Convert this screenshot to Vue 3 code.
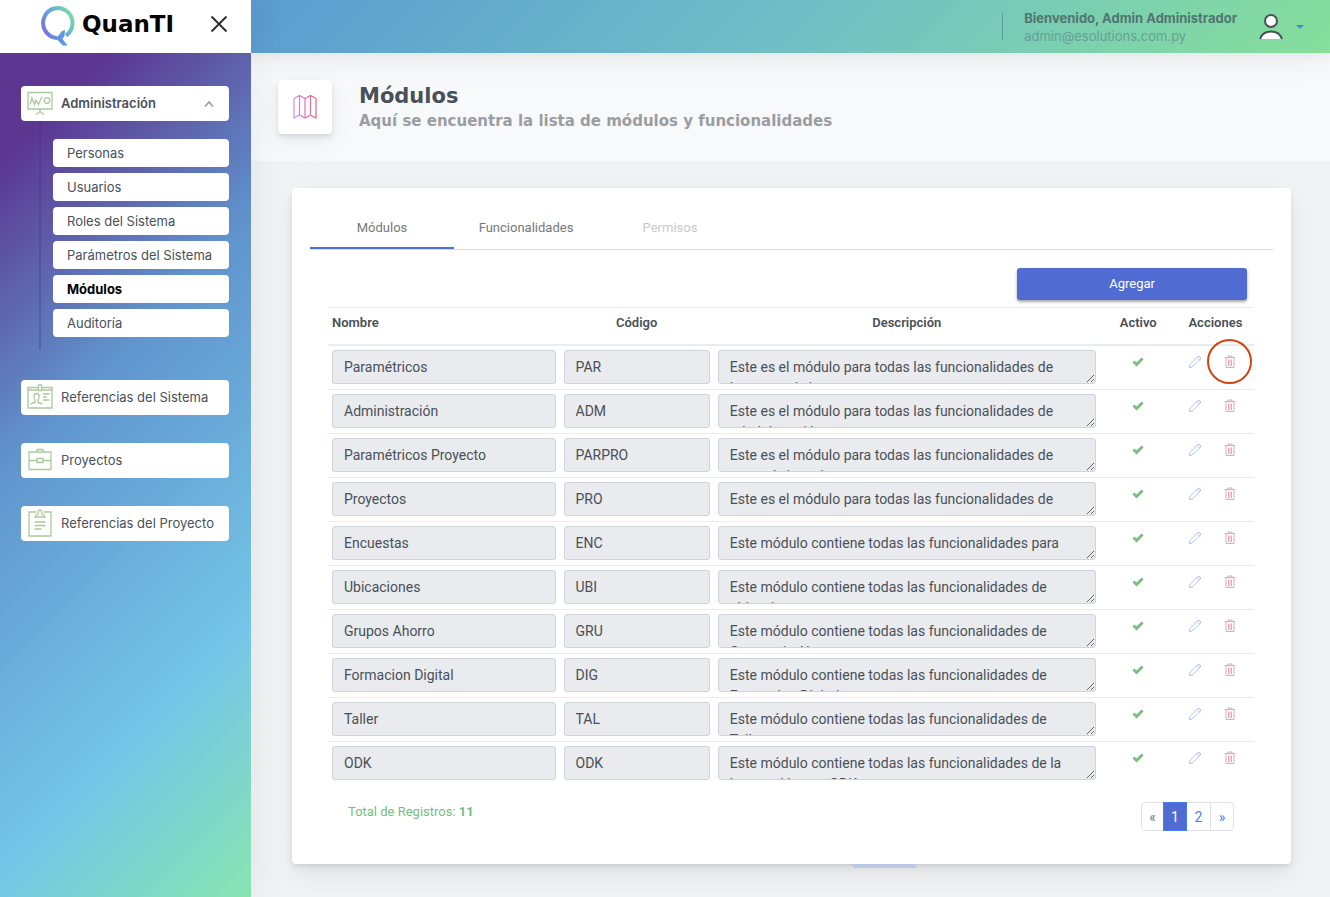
<script setup>
import { ref } from 'vue'

const submenu = ['Personas', 'Usuarios', 'Roles del Sistema', 'Parámetros del Sistema', 'Módulos', 'Auditoría']

const rows = ref([
  { name: 'Paramétricos', code: 'PAR', text: 'Este es el módulo para todas las funcionalidades de los paramétricos', marked: true },
  { name: 'Administración', code: 'ADM', text: 'Este es el módulo para todas las funcionalidades de administración' },
  { name: 'Paramétricos Proyecto', code: 'PARPRO', text: 'Este es el módulo para todas las funcionalidades de paramétricos de proyecto' },
  { name: 'Proyectos', code: 'PRO', text: 'Este es el módulo para todas las funcionalidades de proyectos' },
  { name: 'Encuestas', code: 'ENC', text: 'Este módulo contiene todas las funcionalidades para' },
  { name: 'Ubicaciones', code: 'UBI', text: 'Este módulo contiene todas las funcionalidades de ubicaciones' },
  { name: 'Grupos Ahorro', code: 'GRU', text: 'Este módulo contiene todas las funcionalidades de Grupos de Ahorro' },
  { name: 'Formacion Digital', code: 'DIG', text: 'Este módulo contiene todas las funcionalidades de Formacion Digital' },
  { name: 'Taller', code: 'TAL', text: 'Este módulo contiene todas las funcionalidades de Taller' },
  { name: 'ODK', code: 'ODK', text: 'Este módulo contiene todas las funcionalidades de la integración con ODK' },
])
</script>

<template>
  <div class="app">
    <aside class="sidebar">
      <div class="brand">
        <a class="logo" href="#">
          <svg class="logo-mark" viewBox="0 0 36 42" aria-hidden="true">
            <defs>
              <linearGradient id="logoRing" x1="0" y1="0.8" x2="1" y2="0.2">
                <stop offset="0" stop-color="#7a6ee0" />
                <stop offset="0.45" stop-color="#62a8de" />
                <stop offset="1" stop-color="#79dba6" />
              </linearGradient>
            </defs>
            <path d="M17 33 A14.700 15 0 1 1 26 30.500" fill="none" stroke="url(#logoRing)" stroke-width="4" />
            <path d="M25 25 L22 26 L16 33.500 L23 40.500 L27.500 40.500 L22.500 34 L24.500 31 Z" fill="#6196e2" />
          </svg>
          <span>QuanTI</span>
        </a>
        <button class="close" type="button" aria-label="Cerrar menú">
          <svg viewBox="0 0 18 18"><path d="M1.500 1.500 L16.500 16.500 M16.500 1.500 L1.500 16.500" fill="none" stroke="#2a2a2a" stroke-width="1.800" /></svg>
        </button>
      </div>

      <nav class="menu">
        <div class="group">
          <a class="item open" href="#">
            <svg class="item-icon" viewBox="0 0 26 28">
              <path d="M1 3.500 H25 V20 H1 Z M13 20 V23 M9 25.500 L13 22.500 L17 25.500 M3 15.500 L5 9 L7.500 15.500 L9 11 L11.500 15.500 L15 7.500" />
              <circle cx="20" cy="11.500" r="2.800" />
            </svg>
            <span>Administración</span>
            <svg class="chevron" viewBox="0 0 10 10"><path d="M1 7.500 L5 3 L9 7.500" /></svg>
          </a>
          <ul class="submenu">
            <li v-for="label in submenu" :key="label">
              <a href="#" :class="{ active: label === 'Módulos' }">{{ label }}</a>
            </li>
          </ul>
        </div>
        <a class="item" href="#">
          <svg class="item-icon" viewBox="0 0 26 28">
            <path d="M11 4.500 H1 V25 H25 V4.500 H15 M1 7 H11 M15 7 H25 M11.500 2 H14.500 V7.500 H11.500 Z M4 21.500 Q4.500 20 8 19.500 V17 Q6.500 15.500 7 13 Q7 10.500 9.500 10.500 Q12 10.500 12 13 Q12.500 15.500 11 17 V19.500 Q14.500 20 15 21.500 M16 11 H22.500 M16 14 H20 M16 17 H22.500" />
          </svg>
          <span>Referencias del Sistema</span>
        </a>
        <a class="item" href="#">
          <svg class="item-icon" viewBox="0 0 26 28">
            <path d="M2 6 H24 V23.500 H2 Z M10 6 V3.500 H16 V6 M2 14.500 H10 M16 14.500 H24 M10 12.500 H16 V16.500 H10 Z" />
          </svg>
          <span>Proyectos</span>
        </a>
        <a class="item" href="#">
          <svg class="item-icon" viewBox="0 0 26 28">
            <path d="M9 3 H2 V27 H24 V3 H17 M8 8 Q9 5.500 11 5 V3 Q11.300 1 13 1 Q14.700 1 15 3 V5 Q17 5.500 18 8 Z M7.500 13 H18.500 M7.500 16.500 H18.500 M7.500 20 H14.500" />
          </svg>
          <span>Referencias del Proyecto</span>
        </a>
      </nav>
    </aside>

    <div class="main">
      <header class="topbar">
        <div class="user">
          <strong>Bienvenido, Admin Administrador</strong>
          <span>admin@esolutions.com.py</span>
        </div>
        <button class="account" type="button" aria-label="Cuenta">
          <svg class="avatar" viewBox="0 0 26 28">
            <circle cx="13" cy="8" r="6" fill="#fff" stroke="#495057" stroke-width="2" />
            <path d="M2 26 Q4.500 18.500 13 18.500 Q21.500 18.500 24 26" fill="#fff" stroke="#495057" stroke-width="2" />
          </svg>
          <span class="caret"></span>
        </button>
      </header>

      <section class="title-band">
        <div class="title-icon">
          <svg viewBox="0 0 26 26">
            <defs>
              <linearGradient id="mapStroke" x1="0" y1="0" x2="1" y2="0">
                <stop offset="0" stop-color="#d68be6" />
                <stop offset="1" stop-color="#de6680" />
              </linearGradient>
            </defs>
            <path d="M2 24 V4.500 L7.500 1.500 L13 4.500 L18.500 1.500 L24 4.500 V24 L18.500 21 L13 24 L7.500 21 Z M7.500 1.500 V21 M13 4.500 V24 M18.500 1.500 V21" fill="none" stroke="url(#mapStroke)" stroke-width="1.200" />
          </svg>
        </div>
        <div>
          <h1>Módulos</h1>
          <p>Aquí se encuentra la lista de módulos y funcionalidades</p>
        </div>
      </section>

      <main class="content">
        <section class="card">
          <div class="tabs" role="tablist">
            <button type="button" role="tab" class="tab current" aria-selected="true">Módulos</button>
            <button type="button" role="tab" class="tab">Funcionalidades</button>
            <button type="button" role="tab" class="tab" disabled>Permisos</button>
          </div>

          <div class="panel">
            <div class="toolbar">
              <button class="add" type="button">Agregar</button>
            </div>

            <table>
              <colgroup>
                <col class="c-name" />
                <col class="c-code" />
                <col class="c-text" />
                <col class="c-flag" />
                <col class="c-flag" />
              </colgroup>
              <thead>
                <tr>
                  <th class="left">Nombre</th>
                  <th>Código</th>
                  <th>Descripción</th>
                  <th>Activo</th>
                  <th>Acciones</th>
                </tr>
              </thead>
              <tbody>
                <tr v-for="row in rows" :key="row.code">
                  <td><input class="field" type="text" readonly :value="row.name" aria-label="Nombre" /></td>
                  <td><input class="field" type="text" readonly :value="row.code" aria-label="Código" /></td>
                  <td><textarea class="field" rows="1" readonly :value="row.text" aria-label="Descripción"></textarea></td>
                  <td>
                    <div class="icons">
                      <svg class="check" viewBox="0 0 12 10" role="img" aria-label="Activo"><path d="M0.500 5.300 L2.300 3.500 L4.500 5.600 L9.700 0.600 L11.500 2.400 L4.500 9.500 Z" /></svg>
                    </div>
                  </td>
                  <td>
                    <div class="icons actions">
                      <button type="button" aria-label="Editar">
                        <svg class="pencil" viewBox="0 0 14 14"><path d="M1.300 12.700 L2.200 9.200 L9.800 1.600 Q10.800 0.700 12 1.900 Q13.300 3.100 12.300 4.200 L4.700 11.800 Z M9 2.400 L11.500 4.900" /></svg>
                      </button>
                      <button type="button" aria-label="Eliminar" class="remove">
                        <svg class="trash" viewBox="0 0 12 14"><path d="M2 3 V12.500 H10 V3 M0.800 2.500 H11.200 M4 2.500 V1 H8 V2.500 M4.500 4.500 V11 M6 4.500 V11 M7.500 4.500 V11" /></svg>
                        <span v-if="row.marked" class="marker"></span>
                      </button>
                    </div>
                  </td>
                </tr>
              </tbody>
            </table>

            <div class="footer">
              <p>Total de Registros: <strong>11</strong></p>
              <nav class="pages" aria-label="Paginación">
                <a class="off" href="#">«</a>
                <a class="on" href="#">1</a>
                <a href="#">2</a>
                <a href="#">»</a>
              </nav>
            </div>
          </div>
          <span class="tail"></span>
        </section>
      </main>
    </div>
  </div>
</template>

<style>
body {
  margin: 0;
}
</style>

<style scoped>
* {
  box-sizing: border-box;
}
.app {
  display: flex;
  min-height: 100vh;
  background: #f1f2f4;
  color: #495057;
  font-family: Inter, "Liberation Sans", sans-serif;
  font-size: 13px;
}
a {
  color: inherit;
  text-decoration: none;
}
button {
  margin: 0;
  padding: 0;
  border: 0;
  background: none;
  font: inherit;
  color: inherit;
}
svg {
  display: block;
  flex: none;
}
.sidebar {
  position: relative;
  z-index: 2;
  display: flex;
  flex-direction: column;
  flex: none;
  width: 251px;
  box-shadow: 7px 0 30px rgba(8, 10, 20, 0.05);
}
.brand {
  display: flex;
  align-items: center;
  justify-content: space-between;
  height: 53px;
  padding: 0 23px 5px 40px;
  background: #fff;
}
.logo {
  display: flex;
  align-items: center;
  gap: 6px;
  color: #050505;
  font: bold 23px/42px "DejaVu Sans", sans-serif;
}
.logo-mark {
  width: 36px;
  height: 42px;
  margin-top: 4px;
}
.close svg {
  width: 18px;
  height: 18px;
}
.menu {
  display: flex;
  flex: 1;
  flex-direction: column;
  gap: 28px;
  padding: 33px 22px 33px 21px;
  background: linear-gradient(135deg, #5c3691 10%, #6094cd 38%, #74c6e8 75%, #88e5b0 100%);
}
.item {
  display: flex;
  align-items: center;
  gap: 7px;
  height: 35px;
  padding: 0 15px 2px 6px;
  border-radius: 4px;
  background: #fff;
}
.item.open {
  font-weight: 600;
}
.item-icon {
  width: 26px;
  height: 28px;
  margin-right: 1px;
  fill: none;
  stroke: #abc99b;
  stroke-width: 1.3;
}
.chevron {
  width: 10px;
  height: 10px;
  margin: 2px 0 0 auto;
  fill: none;
  stroke: #999;
  stroke-width: 1.5;
}
.submenu {
  display: flex;
  flex-direction: column;
  gap: 6px;
  margin: 0 0 2px 18px;
  padding: 18px 0 13px 12px;
  border-left: 2px solid rgba(60, 50, 130, 0.3);
  list-style: none;
}
.submenu a {
  display: block;
  height: 28px;
  padding: 0 14px;
  border-radius: 4px;
  background: #fff;
  line-height: 28px;
}
.submenu .active {
  color: #000;
  font-weight: 700;
}
.main {
  display: flex;
  flex: 1;
  flex-direction: column;
  min-width: 0;
}
.topbar {
  position: relative;
  z-index: 1;
  display: flex;
  align-items: center;
  justify-content: flex-end;
  gap: 21px;
  height: 53px;
  padding-right: 26px;
  background: linear-gradient(135deg, #5b9bd0 0%, #6fbfc6 50%, #86df9b 100%);
  box-shadow: 0 4px 9px rgba(4, 9, 20, 0.03), 0 7px 30px rgba(4, 9, 20, 0.06);
}
.user {
  display: flex;
  flex-direction: column;
  height: 27px;
  justify-content: center;
  padding-left: 21px;
  border-left: 1px solid rgba(60, 110, 110, 0.5);
  line-height: 18px;
}
.user strong {
  color: #50756f;
}
.user span {
  color: #67a095;
}
.account {
  display: flex;
  align-items: center;
  gap: 12px;
}
.avatar {
  width: 26px;
  height: 28px;
}
.caret {
  border: 4px solid transparent;
  border-top-color: #5288c8;
  border-bottom: 0;
}
.title-band {
  display: flex;
  align-items: center;
  gap: 27px;
  height: 108px;
  padding: 0 27px;
  background: #f8f9fb;
}
.title-icon {
  display: grid;
  place-items: center;
  width: 54px;
  height: 54px;
  border-radius: 4px;
  background: #fff;
  box-shadow: 0 7px 30px rgba(8, 10, 37, 0.05), 0 4px 9px rgba(8, 10, 37, 0.08), 0 2px 3px rgba(8, 10, 37, 0.05);
}
.title-icon svg {
  width: 26px;
  height: 26px;
}
h1,
.title-band p {
  margin: 0;
  font-family: "DejaVu Sans", sans-serif;
  font-weight: 700;
}
h1 {
  color: #495057;
  font-size: 21px;
  line-height: 28px;
}
.title-band p {
  color: #9a9da1;
  font-size: 15px;
  line-height: 22px;
}
.content {
  flex: 1;
  padding: 27px 39px 33px 41px;
  font-family: Roboto, sans-serif;
}
.card {
  position: relative;
  min-height: 676px;
  padding: 19px 18px 32px;
  border-radius: 4px;
  background: #fff;
  box-shadow: 0 7px 35px rgba(8, 10, 20, 0.03), 0 15px 22px rgba(8, 10, 20, 0.03), 0 4px 9px rgba(8, 10, 20, 0.06), 0 2px 3px rgba(8, 10, 20, 0.05);
}
.tabs {
  display: flex;
  border-bottom: 1px solid #dcdcde;
}
.tab {
  width: 144px;
  height: 42px;
  border-bottom: 2px solid transparent;
  color: #777;
}
.tab.current {
  border-bottom-color: #4f6fd8;
}
.tab:disabled {
  color: #c9c9c9;
}
.panel {
  padding: 18px 19px 0 18px;
}
.toolbar {
  display: flex;
  justify-content: flex-end;
  padding: 0 7px 7px 0;
}
.add {
  width: 25%;
  height: 32px;
  padding-bottom: 2px;
  border-radius: 3px;
  background: #506cd3;
  color: #fff;
  box-shadow: 0 2px 3px rgba(0, 0, 0, 0.35);
}
table {
  width: 100%;
  border-collapse: separate;
  border-spacing: 0;
  table-layout: fixed;
}
.c-name {
  width: 25%;
}
.c-code {
  width: calc(100% / 6);
}
.c-text {
  width: calc(500% / 12);
}
.c-flag {
  width: calc(100% / 12);
}
th {
  height: 39px;
  padding: 5px 4px 0;
  border-top: 1px solid #e9ecef;
  border-bottom: 2px solid #e9ecef;
  font-weight: 600;
  line-height: 19px;
  text-align: center;
  vertical-align: top;
}
th.left {
  text-align: left;
}
td {
  height: 44px;
  padding: 4px 4px 5px;
  border-bottom: 1px solid #e9ecef;
  vertical-align: top;
}
tr:last-child td {
  padding-bottom: 4px;
  border-bottom: 0;
}
.field {
  display: block;
  width: 100%;
  height: 34px;
  margin: 0;
  padding: 6px 11px;
  border: 1px solid #ced4da;
  border-radius: 3px;
  outline: 0;
  background: #e9ebef;
  color: #495057;
  font: 14px/21px Roboto, sans-serif;
}
textarea.field {
  padding-right: 20px;
  overflow: hidden;
  resize: vertical;
}
.icons {
  display: flex;
  align-items: center;
  justify-content: center;
  height: 24px;
}
.actions {
  gap: 22px;
  margin-left: -6px;
}
.check {
  width: 12px;
  height: 10px;
  fill: #76bd80;
}
.pencil {
  width: 14px;
  height: 14px;
  fill: none;
  stroke: #b3c1f2;
}
.trash {
  width: 12px;
  height: 14px;
  fill: none;
  stroke: #e5a9b2;
}
.remove {
  position: relative;
}
.marker {
  position: absolute;
  top: 50%;
  left: 50%;
  width: 45px;
  height: 45px;
  margin: -23px;
  border: 2px solid #d4430f;
  border-radius: 50%;
}
.footer {
  display: flex;
  align-items: flex-start;
  justify-content: space-between;
  padding: 16px 20px 0;
}
.footer p {
  margin: 0;
  color: #76bd80;
  line-height: 20px;
}
.pages {
  display: flex;
  border: 1px solid #dee2e6;
  border-radius: 4px;
  color: #4782ee;
  font-size: 14px;
}
.pages a {
  min-width: 23px;
  height: 27px;
  line-height: 28px;
  text-align: center;
}
.pages a + a {
  border-left: 1px solid #dee2e6;
}
.pages .off {
  width: 21px;
  min-width: 21px;
  color: #6c757d;
}
.pages a.on {
  width: 24px;
  height: 29px;
  margin: -1px 0;
  border: 1px solid #447df0;
  background: #506cd3;
  color: #fff;
}
.pages .on + a {
  border-left: 0;
}
.tail {
  position: absolute;
  top: 100%;
  left: 56%;
  width: 66px;
  height: 4px;
  background: #bcc9e4;
  clip-path: polygon(0 0, 96% 0, 100% 100%, 4% 100%);
}
</style>
